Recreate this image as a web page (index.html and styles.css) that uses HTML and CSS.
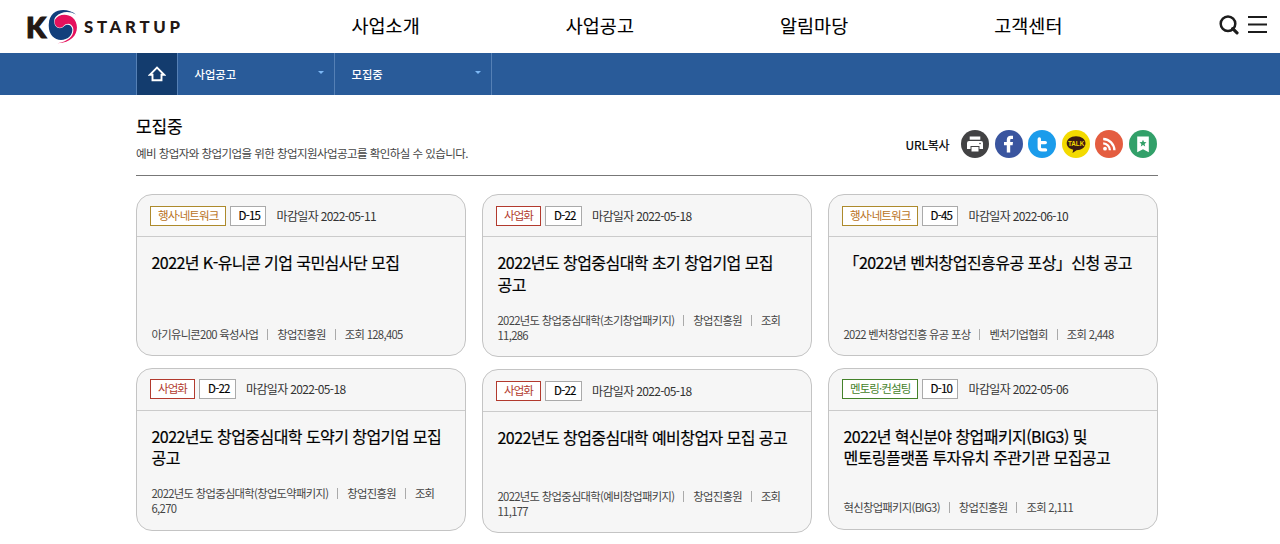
FILE: index.html
```html
<!DOCTYPE html>
<html lang="ko">
<head>
<meta charset="utf-8">
<title>K-Startup 모집중</title>
<link rel="stylesheet" href="styles.css">
</head>
<body>
<header class="top">
  <a class="logo">
    <span class="logo-k">K</span>
    <svg class="logo-mark" width="32" height="36" viewBox="0 0 32 36">
      <path d="M29 5.500C20-2 2.500-1 1.800 15C1 25 7 31 14 31C21 31 25.800 26 25.300 20C24.500 15.500 19.500 14.500 16.800 17.500C13.500 21 7.500 19 7.300 13C7 11 7.500 9 9 7.500C14 2.500 22 1.500 29 5.500Z" fill="#123f7c"/>
      <path d="M7.800 11C11 4.800 20 4 25.500 8.500C34 16 31 33.800 10.500 34.300C22 32.500 28 26 26 18.500C24.500 14 19.500 13.500 16.500 17C13.500 20.500 6.500 18.500 7.800 11Z" fill="#e5115c"/>
    </svg>
    <span class="logo-text">STARTUP</span>
  </a>
  <nav class="menu"><a>사업소개</a><a>사업공고</a><a>알림마당</a><a>고객센터</a></nav>
  <div class="tools">
    <svg width="20" height="20" viewBox="0 0 20 20" fill="none" stroke="#1c1c1c"><circle cx="9" cy="8.800" r="7.300" stroke-width="2.500"/><path d="M13.700 13.700L18 17.800" stroke-width="3.200" stroke-linecap="round"/></svg>
    <svg width="19" height="18" viewBox="0 0 19 18" fill="#1c1c1c"><path d="M0 0h19v2h-19zM0 7.500h19v2h-19zM0 15h19v2h-19z"/></svg>
  </div>
</header>
<div class="crumbs">
  <div class="crumb-row">
    <a class="home"><svg width="18" height="16" viewBox="0 0 18 16" fill="none" stroke="#fff" stroke-width="1.900"><path d="M1.800 8.800L9 1.600L16.200 8.800H13.500V14.300H4.500V8.800Z"/></svg></a>
    <a class="crumb">사업공고<i class="caret"></i></a>
    <a class="crumb">모집중<i class="caret"></i></a>
  </div>
</div>
<main class="page">
  <div class="page-head">
    <div>
      <h1 class="title">모집중</h1>
      <p class="desc">예비 창업자와 창업기업을 위한 창업지원사업공고를 확인하실 수 있습니다.</p>
    </div>
    <div class="share">
      <span class="url">URL복사</span>
      <svg class="round" viewBox="0 0 28 28"><circle cx="14" cy="14" r="14" fill="#424244"/><path d="M8.700 6.500h10.600v3.200H8.700z" fill="#fff"/><path d="M8 11h12a2 2 0 0 1 2 2v6h-3.500v-3h-9v3H6v-6a2 2 0 0 1 2-2z" fill="#fff"/><path d="M10.500 17h7v4.500h-7z" fill="#fff"/><circle cx="19" cy="13.500" r=".8" fill="#424244"/></svg>
      <svg class="round" viewBox="0 0 28 28"><circle cx="14" cy="14" r="14" fill="#3a559f"/><path d="M11.800 22.500V15.300H9V12h2.800V9.800C11.800 7 13.500 5.800 15.600 5.800H18V9H16.500C15.400 9 15.200 9.500 15.200 10.300V12H18l-.4 3.300h-2.400v7.200z" fill="#fff"/></svg>
      <svg class="round" viewBox="0 0 28 28"><circle cx="14" cy="14" r="14" fill="#1b9ceb"/><path d="M11.300 9v8.200q0 2.700 2.700 2.700h3.500M11.300 12.600h6" fill="none" stroke="#fff" stroke-width="3.400" stroke-linecap="round"/></svg>
      <svg class="round" viewBox="0 0 28 28"><circle cx="14" cy="14" r="14" fill="#f3da00"/><path d="M14 6.200c5.500 0 9.500 3 9.500 7s-4 7-9 7l-4 2.800.7-3.300C7.500 18.800 4.700 16.500 4.700 13.200c0-4 4-7 9.300-7z" fill="#3b1c12"/><text x="14.100" y="15.800" text-anchor="middle" class="talk">TALK</text></svg>
      <svg class="round" viewBox="0 0 28 28"><circle cx="14" cy="14" r="14" fill="#e45d40"/><circle cx="10" cy="18.700" r="1.900" fill="#fff"/><path d="M8.200 13.300a7 7 0 0 1 6.700 7M8.200 9a11.500 11.500 0 0 1 11.200 11.300" fill="none" stroke="#fff" stroke-width="2.300"/></svg>
      <svg class="round" viewBox="0 0 28 28"><circle cx="14" cy="14" r="14" fill="#32a069"/><path d="M8.200 6.500h11.600v15.800L14 19.200l-5.800 3.100z" fill="#fff"/><path d="M14 9.800l1 2.300 2.500.2-1.900 1.600.6 2.500-2.200-1.400-2.200 1.400.6-2.500-1.900-1.600 2.500-.2z" fill="#32a069"/></svg>
    </div>
  </div>
  <section class="cards">
    <div class="col">
      <article class="card c162">
        <div class="card-top"><span class="tag event">행사·네트워크</span><span class="tag day">D-15</span><span class="date">마감일자 2022-05-11</span></div>
        <div class="card-body"><h2>2022년 K-유니콘 기업 국민심사단 모집</h2><p class="meta"><span>아기유니콘200 육성사업</span><i></i><span>창업진흥원</span><i></i><span>조회 128,405</span></p></div>
      </article>
      <article class="card c163">
        <div class="card-top"><span class="tag biz">사업화</span><span class="tag day">D-22</span><span class="date">마감일자 2022-05-18</span></div>
        <div class="card-body"><h2>2022년도 창업중심대학 도약기 창업기업 모집<br>공고</h2><p class="meta"><span>2022년도 창업중심대학(창업도약패키지)</span><i></i><span>창업진흥원</span><i></i><span>조회<br>6,270</span></p></div>
      </article>
    </div>
    <div class="col">
      <article class="card c163">
        <div class="card-top"><span class="tag biz">사업화</span><span class="tag day">D-22</span><span class="date">마감일자 2022-05-18</span></div>
        <div class="card-body"><h2>2022년도 창업중심대학 초기 창업기업 모집<br>공고</h2><p class="meta"><span>2022년도 창업중심대학(초기창업패키지)</span><i></i><span>창업진흥원</span><i></i><span>조회<br>11,286</span></p></div>
      </article>
      <article class="card c164">
        <div class="card-top"><span class="tag biz">사업화</span><span class="tag day">D-22</span><span class="date">마감일자 2022-05-18</span></div>
        <div class="card-body"><h2>2022년도 창업중심대학 예비창업자 모집 공고</h2><p class="meta"><span>2022년도 창업중심대학(예비창업패키지)</span><i></i><span>창업진흥원</span><i></i><span>조회<br>11,177</span></p></div>
      </article>
    </div>
    <div class="col">
      <article class="card c162">
        <div class="card-top"><span class="tag event">행사·네트워크</span><span class="tag day">D-45</span><span class="date">마감일자 2022-06-10</span></div>
        <div class="card-body"><h2>「2022년 벤처창업진흥유공 포상」신청 공고</h2><p class="meta"><span>2022 벤처창업진흥 유공 포상</span><i></i><span>벤처기업협회</span><i></i><span>조회 2,448</span></p></div>
      </article>
      <article class="card c162">
        <div class="card-top"><span class="tag mentor">멘토링·컨설팅</span><span class="tag day">D-10</span><span class="date">마감일자 2022-05-06</span></div>
        <div class="card-body"><h2>2022년 혁신분야 창업패키지(BIG3) 및<br>멘토링플랫폼 투자유치 주관기관 모집공고</h2><p class="meta"><span>혁신창업패키지(BIG3)</span><i></i><span>창업진흥원</span><i></i><span>조회 2,111</span></p></div>
      </article>
    </div>
  </section>
</main>
</body>
</html>
```
FILE: styles.css
```css
* { box-sizing: border-box; }
body { margin: 0; background: #fff; color: #000; font-family: "Noto Sans CJK KR", sans-serif; height: 544px; overflow: hidden; }
h1, h2, p { margin: 0; }
i { font-style: normal; }

.top { display: flex; align-items: center; height: 53px; padding: 0 13px 0 26px; }
.logo { display: flex; align-items: center; width: 252px; color: #231815; font-family: Lato, sans-serif; }
.logo-k { width: 20px; font-size: 29px; font-weight: 900; line-height: 36px; -webkit-text-stroke: 1.2px #231815; }
.logo-mark { flex: none; margin-left: 1px; }
.logo-text { margin-left: 5px; font-size: 16.800px; font-weight: 900; letter-spacing: 3.700px; line-height: 20px; }
.menu { display: flex; width: 857px; margin-top: -4px; }
.menu a { width: 214.300px; padding-left: 1px; text-align: center; font-size: 18.500px; font-weight: 400; -webkit-text-stroke: .1px #000; line-height: 28px; }
.tools { display: flex; align-items: center; gap: 9px; margin-left: auto; margin-top: -3px; }

.crumbs { height: 42px; background: #295b99; padding-left: 136px; }
.crumb-row { display: flex; height: 42px; border-left: 1px solid #5580b5; width: 356px; }
.home { display: flex; align-items: center; justify-content: center; width: 41px; background: #133c6e; border-right: 1px solid #5580b5; }
.crumb { display: flex; align-items: center; justify-content: space-between; width: 157px; padding: 0 10px 0 16.500px; border-right: 1px solid #5580b5; color: #fff; font-size: 11.300px; font-weight: 500; }
.caret { border: 3px solid transparent; border-top-color: #7db8f5; border-bottom: 0; margin-top: -3px; }

.page { width: 1022px; margin-left: 136px; }
.page-head { display: flex; justify-content: space-between; height: 81px; border-bottom: 1px solid #777; padding-top: 19px; }
.title { font-size: 17px; font-weight: 400; -webkit-text-stroke: .2px #000; line-height: 24px; letter-spacing: -.2px; }
.desc { margin-top: 6px; font-size: 11.500px; line-height: 18px; color: #444; letter-spacing: -.56px; }
.share { display: flex; align-items: center; height: 28px; margin: 16px 1px 0 0; gap: 5.600px; }
.url { margin-right: 6px; font-size: 12px; font-weight: 400; -webkit-text-stroke: .2px #000; letter-spacing: -.2px; }
.round { width: 28px; height: 28px; }
.talk { font-family: "Liberation Sans", sans-serif; font-size: 6.300px; font-weight: 700; fill: #f3da00; }

.cards { display: flex; gap: 16px; margin-top: 18px; }
.col { display: flex; flex-direction: column; gap: 12px; width: 330px; }
.col:not(:nth-child(2)) { gap: 11.500px; }
.card { display: flex; flex-direction: column; border: 1px solid #c4c4c4; border-radius: 16px; background: #f6f6f6; }
.c162 { height: 162px; }
.c163 { height: 163px; }
.c164 { height: 164px; }
.card-top { display: flex; align-items: center; height: 42px; padding-left: 13px; border-bottom: 1px solid #cbcbcb; flex: none; }
.tag { height: 20px; padding: 0 7px; border: 1px solid; background: #fff; font-size: 11.500px; line-height: 17px; letter-spacing: -.9px; margin-right: 4px; white-space: nowrap; }
.event { color: #b9721c; border-color: #ad8a2c; width: 75.500px; }
.biz { color: #b23a2e; width: 45px; }
.mentor { color: #44822a; width: 75.500px; }
.day { color: #000; border-color: #aaa; width: 36.500px; font-weight: 400; padding: 0 8px; -webkit-text-stroke: .15px #000; letter-spacing: -.75px; }
.date { margin: -1px 0 0 6.500px; font-size: 12px; letter-spacing: -.65px; color: #333; }
.card-body { display: flex; flex: 1; flex-direction: column; justify-content: space-between; padding: 15px 0 13.500px 14.500px; }
.card h2 { font-size: 16px; font-weight: 400; -webkit-text-stroke: .2px #000; line-height: 21.500px; letter-spacing: -.56px; white-space: nowrap; }
.meta { font-size: 11.300px; line-height: 14.800px; letter-spacing: -.68px; color: #444; white-space: nowrap; }
.meta i { display: inline-block; width: 1px; height: 11px; margin: 0 9px; background: #aaa; vertical-align: -1px; }
```
